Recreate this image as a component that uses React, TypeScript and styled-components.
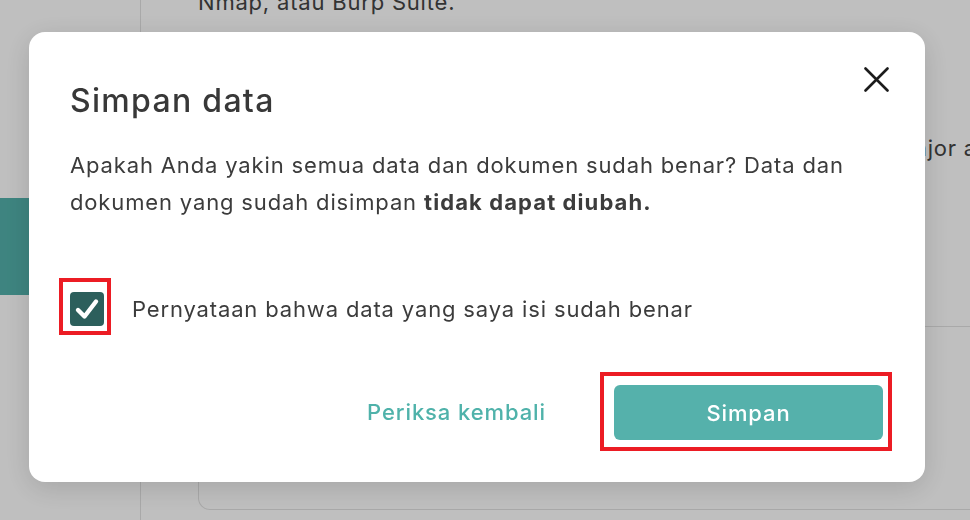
import styled, { createGlobalStyle } from "styled-components";

const GlobalStyle = createGlobalStyle`
  * { box-sizing: border-box; }
  html, body { margin: 0; padding: 0; }
  body {
    font-family: Inter, "Noto Sans", "Liberation Sans", sans-serif;
    background: #ffffff;
    color: #3b3b3b;
    overflow: hidden;
  }
`;

const Page = styled.div`
  display: grid;
  grid-template-columns: 141px 1fr;
  width: 970px;
  height: 520px;
  overflow: hidden;
`;

const Sidebar = styled.aside`
  border-right: 1px solid #e2e2e2;
  padding-top: 198px;
`;

const NavItem = styled.div<{ $active?: boolean }>`
  height: 97px;
  background: ${(p) => (p.$active ? "#53b1ab" : "transparent")};
`;

const Main = styled.main`
  display: flex;
  flex-direction: column;
  padding: 0 0 0 57px;
  margin-top: -14px;
  overflow: hidden;
`;

const Paragraph = styled.p`
  margin: 0;
  font-size: 22px;
  line-height: 32px;
  letter-spacing: 0.8px;
  color: #444;
  white-space: nowrap;
`;

const Section = styled.div`
  display: flex;
  justify-content: flex-end;
  padding-top: 114px;
  height: 309px;
  border-bottom: 1px solid #e2e2e2;
  margin: 0 -7px 0 300px;
`;

const Card = styled.div`
  height: 183px;
  border: 1px solid #e2e2e2;
  border-top: none;
  border-radius: 0 0 0 12px;
  margin-right: -20px;
`;

const Overlay = styled.div`
  position: fixed;
  inset: 0;
  background: rgba(0, 0, 0, 0.25);
`;

const Modal = styled.div`
  position: absolute;
  left: 29px;
  top: 32px;
  width: 896px;
  height: 450px;
  background: #fff;
  border-radius: 16px;
  box-shadow: 0 6px 28px rgba(0, 0, 0, 0.14);
  padding: 35px 36px 0 41px;
  display: flex;
  flex-direction: column;
`;

const Header = styled.div`
  display: flex;
  justify-content: space-between;
  align-items: flex-start;
`;

const Title = styled.h2`
  margin: 14px 0 0;
  font-size: 32px;
  line-height: 40px;
  font-weight: 500;
  color: #383838;
  letter-spacing: 1.3px;
`;

const CloseButton = styled.button`
  width: 25px;
  height: 25px;
  padding: 0;
  border: none;
  background: none;
  display: flex;
  cursor: pointer;
`;

const Body = styled.p`
  margin: 26px 0 0;
  font-size: 22px;
  line-height: 37px;
  color: #3c3c3c;
  letter-spacing: 0.85px;

  b {
    font-weight: 700;
    letter-spacing: 1.1px;
  }
`;

const CheckRow = styled.label`
  display: flex;
  align-items: center;
  gap: 21px;
  margin: 57px 0 0 -11px;
`;

const Highlight = styled.span<{ $pad: string }>`
  display: inline-flex;
  border: 4px solid #ec1c24;
  padding: ${(p) => p.$pad};
`;

const CheckBox = styled.span`
  width: 34px;
  height: 34px;
  border-radius: 4px;
  background: #2c5f5c;
  display: flex;
  align-items: center;
  justify-content: center;
`;

const CheckLabel = styled.span`
  font-size: 22px;
  color: #3c3c3c;
  letter-spacing: 0.85px;
  padding-top: 4px;
`;

const Footer = styled.div`
  display: flex;
  justify-content: flex-end;
  align-items: center;
  gap: 54px;
  margin: 37px -3px 0 0;
`;

const LinkButton = styled.button`
  border: none;
  background: none;
  padding: 0;
  font-family: inherit;
  font-size: 22px;
  font-weight: 500;
  letter-spacing: 0.9px;
  color: #4fb2aa;
  cursor: pointer;
`;

const PrimaryButton = styled.button`
  width: 269px;
  height: 55px;
  border: none;
  border-radius: 6px;
  background: #55b1ab;
  color: #fff;
  font-family: inherit;
  font-size: 22px;
  font-weight: 500;
  letter-spacing: 0.9px;
  cursor: pointer;
`;

export default function App() {
  return (
    <>
      <GlobalStyle />
      <Page>
        <Sidebar>
          <NavItem $active />
        </Sidebar>
        <Main>
          <Paragraph>Nmap, atau Burp Suite.</Paragraph>
          <Section>
            <Paragraph>kategori mayor dan major a</Paragraph>
          </Section>
          <Card />
        </Main>
      </Page>
      <Overlay>
        <Modal role="dialog" aria-modal="true">
          <Header>
            <Title>Simpan data</Title>
            <CloseButton aria-label="Tutup">
              <svg width="25" height="25" viewBox="0 0 25 25" fill="none">
                <path d="M1.5 1.5L23.5 23.5M23.5 1.5L1.5 23.5" stroke="#1c1c1c" strokeWidth="2.6" strokeLinecap="round" />
              </svg>
            </CloseButton>
          </Header>
          <Body>
            Apakah Anda yakin semua data dan dokumen sudah benar? Data dan
            <br />
            dokumen yang sudah disimpan <b>tidak dapat diubah.</b>
          </Body>
          <CheckRow>
            <Highlight $pad="10px 3px 5px 7px">
              <CheckBox>
                <svg width="26" height="24" viewBox="0 0 26 24" fill="none">
                  <path d="M4 13L10.5 19.5L22 4.5" stroke="#fff" strokeWidth="4.4" strokeLinecap="round" strokeLinejoin="round" />
                </svg>
              </CheckBox>
            </Highlight>
            <CheckLabel>Pernyataan bahwa data yang saya isi sudah benar</CheckLabel>
          </CheckRow>
          <Footer>
            <LinkButton>Periksa kembali</LinkButton>
            <Highlight $pad="9px 5px 7px 10px">
              <PrimaryButton>Simpan</PrimaryButton>
            </Highlight>
          </Footer>
        </Modal>
      </Overlay>
    </>
  );
}
